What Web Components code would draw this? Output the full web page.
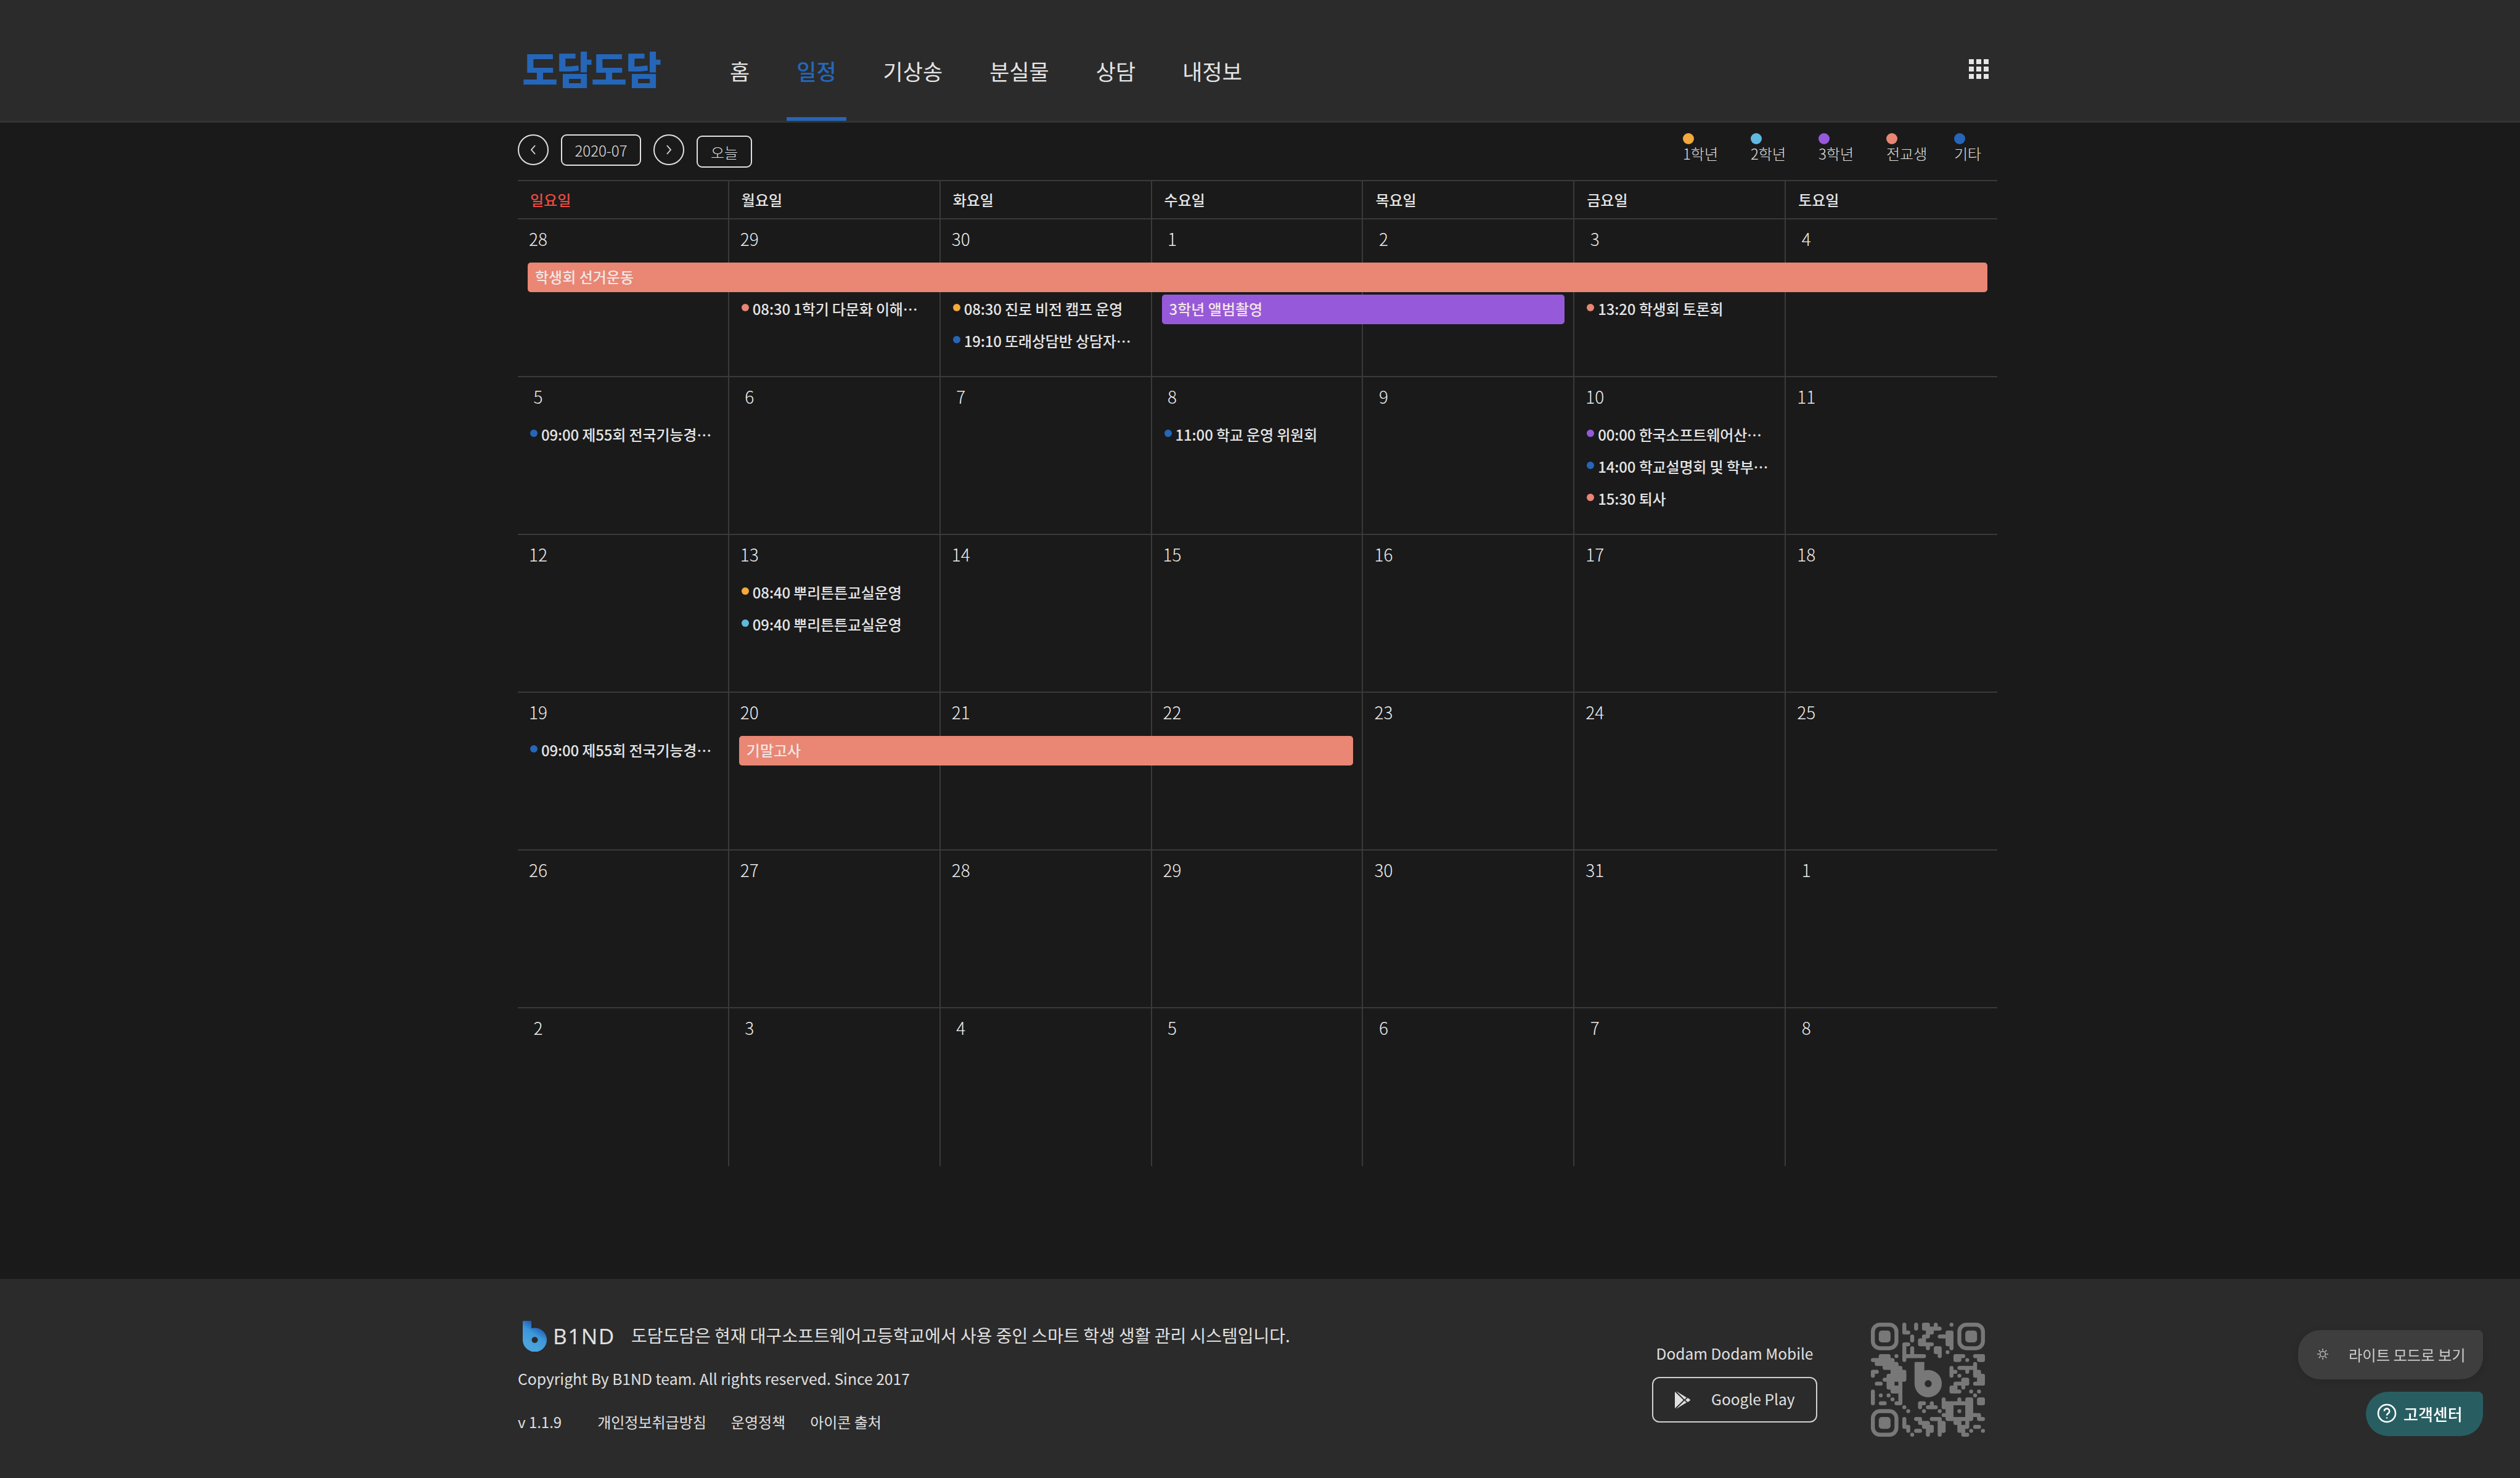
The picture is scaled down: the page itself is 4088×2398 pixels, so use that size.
<!DOCTYPE html>
<html lang="ko">
<head>
<meta charset="utf-8">
<title>도담도담</title>
<style>
  html, body { margin: 0; height: 100%; background: #1a1a1a; }
  body { font-family: "Noto Sans CJK KR", "Noto Sans", sans-serif; font-feature-settings: "locl" 0; color: #e0e0e0; display: flex; flex-direction: column; min-height: 2398px; }
  dd-main { flex: 1; }
</style>
</head>
<body>
<dd-header></dd-header>
<dd-main>
  <dd-toolbar></dd-toolbar>
  <dd-calendar></dd-calendar>
</dd-main>
<dd-footer></dd-footer>
<dd-fab></dd-fab>

<script>
const COLORS = { first: '#f3a93b', second: '#5fb8e0', third: '#9659da', transfer: '#e98674', etc: '#2566b8' };
const B_PATH = 'M0 1.5A1.5 1.5 0 0 1 1.5 0H14V12.2A19.5 19.5 0 1 1 0 30.5zM19.5 26a5 5 0 1 0 .01 0z';

class DdHeader extends HTMLElement {
  constructor() {
    super();
    this.attachShadow({ mode: 'open' });
    const items = ['홈', '일정', '기상송', '분실물', '상담', '내정보'];
    this.shadowRoot.innerHTML = `
      <style>
        :host { display: block; background: #2b2b2b; border-bottom: 3px solid #333; height: 196px; }
        .wrap { width: 2400px; margin-left: 840px; height: 100%; display: flex; align-items: stretch; }
        .logo { width: 328px; padding: 24px 0 0 7px; box-sizing: border-box; font-size: 63px; font-weight: 900; color: #2566b8; line-height: 172px; letter-spacing: -2px; height: 196px; }
        nav { display: flex; gap: 44px; }
        a { display: flex; align-items: center; padding: 32px 16px 0; font-size: 35px; color: #e5e5e5; box-sizing: border-box; border-bottom: 6px solid transparent; border-top: 6px solid transparent; }
        a.on { color: #2566b8; border-bottom-color: #2566b8; font-weight: 500; }
        .apps { margin: 28px 14px 0 auto; align-self: center; display: grid; grid-template-columns: repeat(3, 8px); grid-auto-rows: 8px; gap: 4px; }
        .apps i { background: #e5e5e5; }
      </style>
      <div class="wrap">
        <div class="logo">도담도담</div>
        <nav>${items.map(t => `<a class="${t === '일정' ? 'on' : ''}">${t}</a>`).join('')}</nav>
        <div class="apps">${'<i></i>'.repeat(9)}</div>
      </div>
    `;
  }
}

class DdToolbar extends HTMLElement {
  constructor() {
    super();
    this.attachShadow({ mode: 'open' });
    const legend = [['1학년', COLORS.first], ['2학년', COLORS.second], ['3학년', COLORS.third], ['전교생', COLORS.transfer], ['기타', COLORS.etc]];
    this.shadowRoot.innerHTML = `
      <style>
        :host { display: block; width: 2400px; margin-left: 840px; height: 93px; box-sizing: border-box; }
        .bar { display: flex; align-items: flex-start; height: 100%; }
        .left { display: flex; gap: 20px; padding-top: 19px; }
        .round { width: 50px; height: 50px; border: 2px solid #e0e0e0; border-radius: 50%; box-sizing: border-box; display: flex; align-items: center; justify-content: center; }
        .box { height: 51px; width: 130px; border: 2px solid #e0e0e0; border-radius: 9px; box-sizing: border-box; display: flex; align-items: center; justify-content: center; font-size: 24px; font-weight: 300; }
        .today { width: 90px; height: 52px; margin-top: 2px; }
        .legend { margin-left: auto; display: flex; padding-top: 17px; }
        .item { flex: 0 0 110px; font-size: 24px; font-weight: 300; line-height: 29px; }
        .item:last-child { flex-basis: 70px; }
        .item i { display: block; width: 18px; height: 18px; border-radius: 50%; }
      </style>
      <div class="bar">
        <div class="left">
          <div class="round"><svg width="10" height="18" viewBox="0 0 10 18"><path d="M8 2 2 9l6 7" fill="none" stroke="#e0e0e0" stroke-width="1.8"/></svg></div>
          <div class="box">2020-07</div>
          <div class="round"><svg width="10" height="18" viewBox="0 0 10 18"><path d="m2 2 6 7-6 7" fill="none" stroke="#e0e0e0" stroke-width="1.8"/></svg></div>
          <div class="box today">오늘</div>
        </div>
        <div class="legend">
          ${legend.map(([t, c]) => `<div class="item"><i style="background:${c}"></i>${t}</div>`).join('')}
        </div>
      </div>
    `;
  }
}

class DdWeek extends HTMLElement {
  constructor() {
    super();
    this.attachShadow({ mode: 'open' });
    this.shadowRoot.innerHTML = `
      <style>
        :host { display: grid; grid-template-columns: repeat(7, 1fr); grid-template-rows: 66px 48px 48px 48px 1fr; row-gap: 4px; height: 256px; box-sizing: border-box; border-bottom: 2px solid #3a3a3a; }
        :host([last]) { border-bottom: 0; }
        .cell { grid-row: 1 / -1; border-right: 2px solid #3a3a3a; }
        .cell.end { border-right: 0; }
        .date { grid-row: 1; font-size: 28px; font-weight: 300; line-height: 63px; width: 30px; margin-left: 18px; text-align: center; color: #eee; }
        .bar { margin: 0 16px; border-radius: 5px; padding-left: 12px; font-size: 24px; line-height: 46px; color: #f2e6e4; font-weight: 500; z-index: 1; }
        .ev { display: flex; align-items: center; gap: 6px; padding-left: 20px; font-size: 24px; font-weight: 500; color: #e5e5e5; white-space: nowrap; letter-spacing: -0.15px; line-height: 44px; height: 45px; }
        .ev i { width: 12px; height: 12px; border-radius: 50%; flex: none; margin-top: -3px; }
      </style>
    `;
  }
  set data(week) {
    let html = '';
    for (let c = 1; c <= 7; c++) html += `<div class="cell${c === 7 ? ' end' : ''}" style="grid-column:${c}"></div>`;
    week.dates.forEach((d, i) => { html += `<div class="date" style="grid-column:${i + 1}">${d}</div>`; });
    (week.events || []).forEach(e => {
      if (e.span) {
        html += `<div class="bar" style="grid-column:${e.col} / span ${e.span};grid-row:${e.row + 1};background:${e.color}">${e.text}</div>`;
      } else {
        html += `<div class="ev" style="grid-column:${e.col};grid-row:${e.row + 1}"><i style="background:${e.color}"></i>${e.text}</div>`;
      }
    });
    this.shadowRoot.innerHTML += html;
  }
}

class DdCalendar extends HTMLElement {
  constructor() {
    super();
    this.attachShadow({ mode: 'open' });
    const days = ['일요일', '월요일', '화요일', '수요일', '목요일', '금요일', '토요일'];
    this.shadowRoot.innerHTML = `
      <style>
        :host { display: block; width: 2400px; margin-left: 840px; }
        .head { display: grid; grid-template-columns: repeat(7, 1fr); height: 64px; box-sizing: border-box; border-top: 2px solid #3a3a3a; border-bottom: 2px solid #3a3a3a; }
        .head div { border-right: 2px solid #3a3a3a; padding-left: 20px; font-size: 24px; font-weight: 500; line-height: 60px; color: #e5e5e5; }
        .head div:first-child { color: #ea4a3f; }
        .head div:last-child { border-right: 0; }
      </style>
      <div class="head">${days.map(d => `<div>${d}</div>`).join('')}</div>
      <div id="weeks"></div>
    `;
    const { first, second, third, transfer, etc } = COLORS;
    const contest = '09:00 제55회 전국기능경…';
    const weeks = [
      { dates: [28, 29, 30, 1, 2, 3, 4], events: [
        { col: 1, span: 7, row: 1, color: transfer, text: '학생회 선거운동' },
        { col: 2, row: 2, color: transfer, text: '08:30 1학기 다문화 이해…' },
        { col: 3, row: 2, color: first, text: '08:30 진로 비전 캠프 운영' },
        { col: 3, row: 3, color: etc, text: '19:10 또래상담반 상담자…' },
        { col: 4, span: 2, row: 2, color: third, text: '3학년 앨범촬영' },
        { col: 6, row: 2, color: transfer, text: '13:20 학생회 토론회' }
      ] },
      { dates: [5, 6, 7, 8, 9, 10, 11], events: [
        { col: 1, row: 1, color: etc, text: contest },
        { col: 4, row: 1, color: etc, text: '11:00 학교 운영 위원회' },
        { col: 6, row: 1, color: third, text: '00:00 한국소프트웨어산…' },
        { col: 6, row: 2, color: etc, text: '14:00 학교설명회 및 학부…' },
        { col: 6, row: 3, color: transfer, text: '15:30 퇴사' }
      ] },
      { dates: [12, 13, 14, 15, 16, 17, 18], events: [
        { col: 2, row: 1, color: first, text: '08:40 뿌리튼튼교실운영' },
        { col: 2, row: 2, color: second, text: '09:40 뿌리튼튼교실운영' }
      ] },
      { dates: [19, 20, 21, 22, 23, 24, 25], events: [
        { col: 1, row: 1, color: etc, text: contest },
        { col: 2, span: 3, row: 1, color: transfer, text: '기말고사' }
      ] },
      { dates: [26, 27, 28, 29, 30, 31, 1] },
      { dates: [2, 3, 4, 5, 6, 7, 8] }
    ];
    const box = this.shadowRoot.getElementById('weeks');
    weeks.forEach((w, i) => {
      const el = document.createElement('dd-week');
      if (i === weeks.length - 1) el.setAttribute('last', '');
      box.appendChild(el);
      el.data = w;
    });
  }
}

class DdQr extends HTMLElement {
  constructor() {
    super();
    this.attachShadow({ mode: 'open' });
    const rows = [
      [8,11,13,14,16,20],
      [8,11,13,14,15,16,17],
      [8,9,14,15,19,20],
      [10,13,14,17,18,19,20],
      [10,12,13,19,20],
      [8,9,12,13,14,15,19,20],
      [8,10,14,16,17,20],
      [8,10,16,17,19],
      [2,3,4,6,8,9,10,11,12,13,17,21,22,23,26,27,28],
      [0,1,2,3,4,5,8,21,22,24,27,28],
      [1,2,3,4,5,6,26],
      [3,4,5,6,7,20,22,23,24,25,26],
      [0,1,5,6,7,8,20,21,24,26,27],
      [0,4,5,6,7,8,20,22,26,27,28],
      [3,4,5,6,7,8,23,24,27,28],
      [1,2,4,5,7,21,22,23,24,26,27,28],
      [4,5,6,7,20,21,23],
      [0,5,6,7,20,21,22,25,27],
      [0,2,4,7,26],
      [0,5,7,18,22,24,25,27,28],
      [0,2,3,6,7,12,13,15,18,19,20,21,22,23,24,25,27,28],
      [8,12,14,15,16,18,19,20,24,25],
      [9,13,17,19,20,22,24,25],
      [18,19,20,24,25,26,27],
      [8,11,12,15,16,17,19,20,21,22,23,24,25,27,28],
      [8,12,13,14,17,18,21,22,24],
      [8,9,13,14,15,17,18,22,23,24,26,27],
      [9,11,12,14,15,17,18,22,23,25,28],
      [10,14,17,23,24]
    ];
    const on = (r, c) => rows[r] && rows[r].includes(c);
    let shapes = '';
    rows.forEach((cols, r) => cols.forEach(c => {
      shapes += `<circle cx="${c + .5}" cy="${r + .5}" r=".5"/>`;
      if (on(r, c + 1)) shapes += `<rect x="${c + .5}" y="${r}" width="1" height="1"/>`;
      if (on(r + 1, c)) shapes += `<rect x="${c}" y="${r + .5}" width="1" height="1"/>`;
    }));
    const eye = (x, y) => `
      <rect x="${x + .5}" y="${y + .5}" width="6" height="6" rx="1.8" fill="none" stroke="#787878" stroke-width="1"/>
      <rect x="${x + 2}" y="${y + 2}" width="3" height="3" rx=".8"/>`;
    this.shadowRoot.innerHTML = `
      <style>:host { display: block; width: 185px; height: 185px; } svg { display: block; }</style>
      <svg width="185" height="185" viewBox="0 0 29 29" fill="#787878">
        ${shapes}${eye(0, 0)}${eye(22, 0)}${eye(0, 22)}
        <path fill-rule="evenodd" d="${B_PATH}" transform="translate(11.1 10) scale(.178)"/>
      </svg>
    `;
  }
}

class DdFooter extends HTMLElement {
  constructor() {
    super();
    this.attachShadow({ mode: 'open' });
    this.shadowRoot.innerHTML = `
      <style>
        :host { display: block; background: #2b2b2b; height: 323px; color: #e0e0e0; }
        .wrap { width: 2400px; margin-left: 840px; display: flex; height: 100%; }
        .info { flex: 1; padding-top: 68px; box-sizing: border-box; }
        .brand { display: flex; align-items: center; height: 50px; padding-left: 8px; }
        .b1nd { font-family: "Noto Sans", sans-serif; font-size: 35px; letter-spacing: 1.5px; margin-left: 10px; width: 127px; line-height: 50px; }
        .desc { font-size: 28px; line-height: 50px; margin-top: -4px; }
        .copy { font-size: 24.7px; line-height: 40px; margin-top: 23px; }
        .links { display: flex; font-size: 24px; line-height: 40px; margin-top: 31px; }
        .links span { margin-right: 40px; }
        .links span:first-child { margin-right: 58px; }
        .mobile { width: 268px; padding-top: 101px; box-sizing: border-box; text-align: center; margin-right: 87px; }
        .mobile div { font-size: 24.5px; line-height: 40px; margin-bottom: 18px; white-space: nowrap; }
        .play { height: 74px; border: 2px solid #d0d0d0; border-radius: 12px; box-sizing: border-box; display: flex; align-items: center; padding: 0 0 4px 35px; gap: 33px; font-size: 24.5px; }
        dd-qr { margin-top: 71px; margin-right: 20px; }
      </style>
      <div class="wrap">
        <div class="info">
          <div class="brand">
            <svg width="39" height="50" viewBox="0 0 39 50">
              <defs>
                <linearGradient id="g" x1="0.7" y1="0.2" x2="0.4" y2="0.8"><stop offset="0" stop-color="#1f5fb5"/><stop offset=".45" stop-color="#3d96d8"/><stop offset="1" stop-color="#4aa3df"/></linearGradient>
              </defs>
              <path fill="url(#g)" fill-rule="evenodd" d="${B_PATH}"/>
            </svg>
            <span class="b1nd">B1ND</span>
            <span class="desc">도담도담은 현재 대구소프트웨어고등학교에서 사용 중인 스마트 학생 생활 관리 시스템입니다.</span>
          </div>
          <div class="copy">Copyright By B1ND team. All rights reserved. Since 2017</div>
          <div class="links"><span>v 1.1.9</span><span>개인정보취급방침</span><span>운영정책</span><span>아이콘 출처</span></div>
        </div>
        <div class="mobile">
          <div>Dodam Dodam Mobile</div>
          <section class="play">
            <svg width="26" height="29" viewBox="0 0 26 29" fill="#e0e0e0" style="margin-top:4px">
              <path d="M0 1 14 14.5 0 28z"/>
              <path d="M2 0 19 10.5 15.6 13.5zM2 29 19 18.5 15.6 15.5zM21 11l4.5 3.5L21 18l-4-3.5z"/>
            </svg>
            <span>Google Play</span>
          </section>
        </div>
        <dd-qr></dd-qr>
      </div>
    `;
  }
}

class DdFab extends HTMLElement {
  constructor() {
    super();
    this.attachShadow({ mode: 'open' });
    const rays = [0, 45, 90, 135, 180, 225, 270, 315].map(a => `<path d="M10 1.2v3" transform="rotate(${a} 10 10)"/>`).join('');
    this.shadowRoot.innerHTML = `
      <style>
        :host { position: fixed; right: 60px; top: 2158px; display: flex; flex-direction: column; align-items: flex-end; gap: 20px; }
        .btn { display: flex; align-items: center; box-sizing: border-box; border-radius: 36px 8px 36px 36px; }
        .light { width: 300px; height: 80px; background: #3e3e3e; color: #ccc; font-size: 24.3px; padding: 0 0 2px 30px; gap: 32px; box-shadow: 0 2px 12px rgba(0,0,0,.12); }
        .help { width: 190px; height: 72px; background: #285e61; color: #fff; font-size: 26px; font-weight: 500; padding: 0 0 2px 18px; gap: 11px; }
      </style>
      <div class="btn light">
        <svg width="20" height="20" viewBox="0 0 20 20" fill="none" stroke="#ccc" stroke-width="1.4"><circle cx="10" cy="10" r="4.4"/>${rays}</svg>
        <span>라이트 모드로 보기</span>
      </div>
      <div class="btn help">
        <svg width="32" height="32" viewBox="0 0 32 32" fill="none" stroke="#fff" stroke-width="2.6"><circle cx="16" cy="16" r="14"/><path d="M11.8 12.6a4.2 4.2 0 1 1 6.4 3.6c-1.4.9-2.2 1.6-2.2 3.2"/><circle cx="16" cy="23.4" r="1.2" fill="#fff" stroke="none"/></svg>
        <span>고객센터</span>
      </div>
    `;
  }
}

customElements.define('dd-header', DdHeader);
customElements.define('dd-toolbar', DdToolbar);
customElements.define('dd-week', DdWeek);
customElements.define('dd-calendar', DdCalendar);
customElements.define('dd-qr', DdQr);
customElements.define('dd-footer', DdFooter);
customElements.define('dd-fab', DdFab);
</script>
</body>
</html>
